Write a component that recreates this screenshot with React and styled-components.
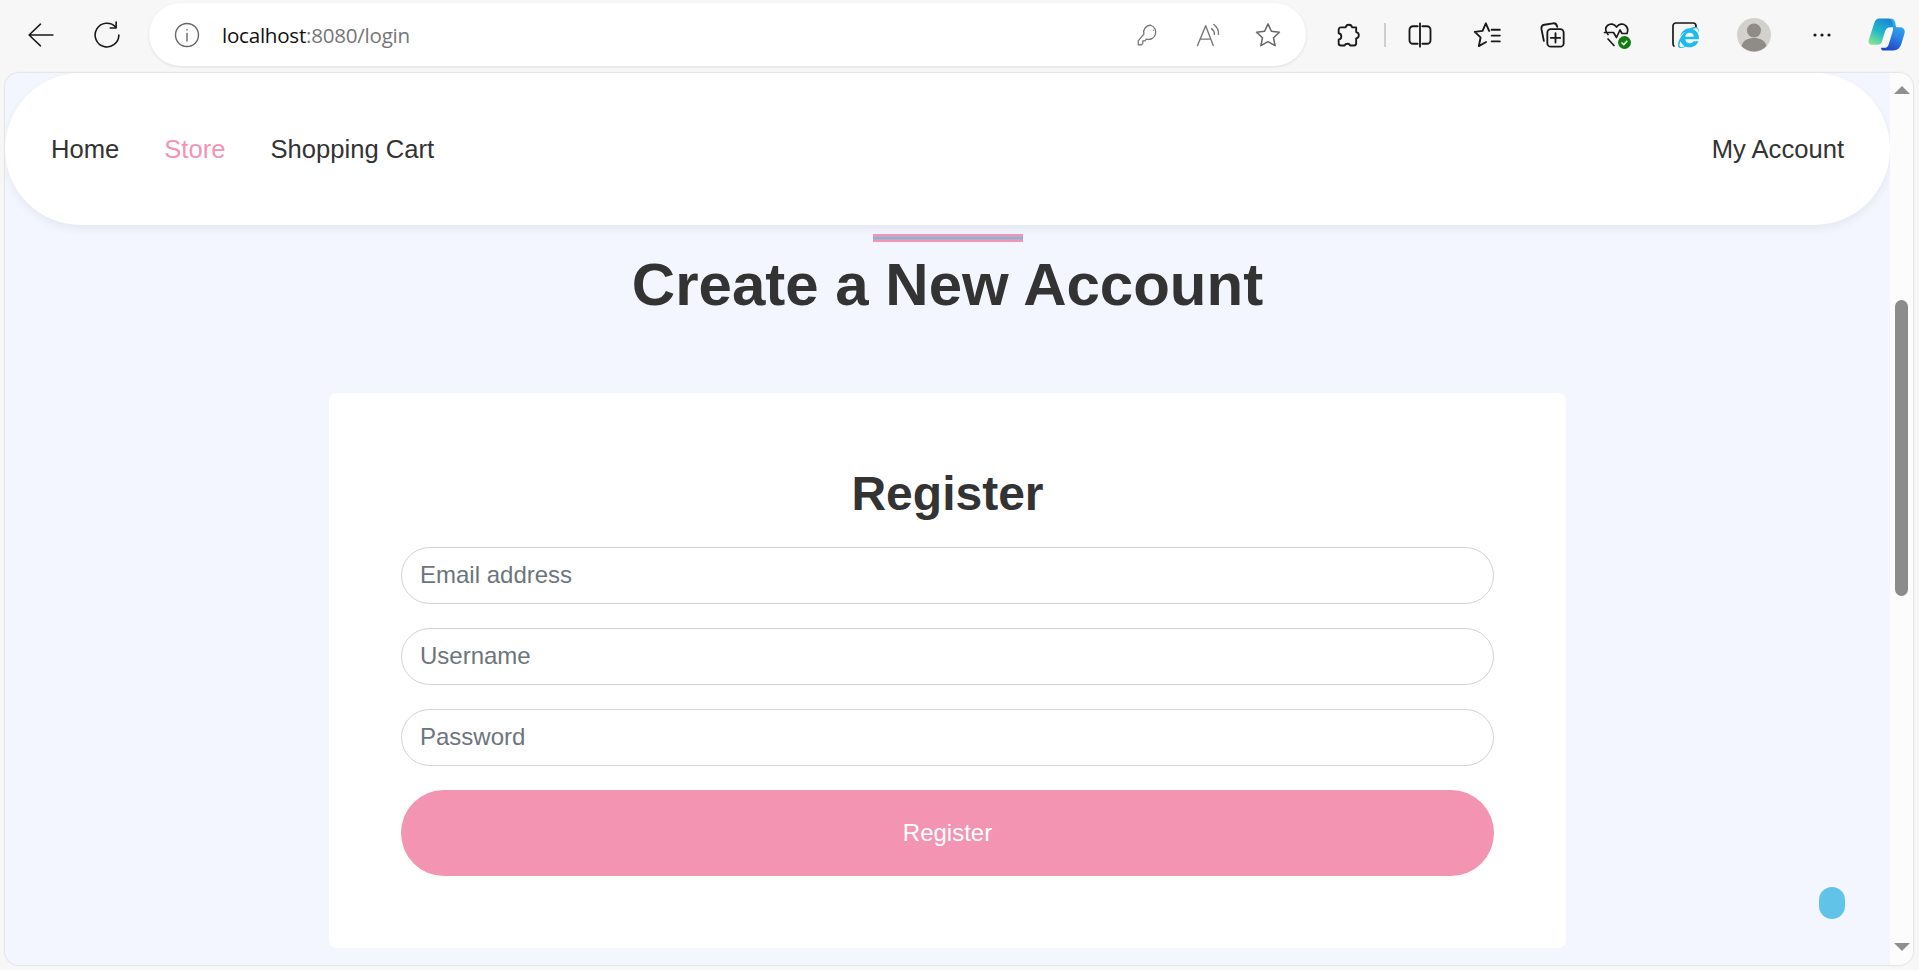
import React from 'react';
import styled, { createGlobalStyle } from 'styled-components';
import { FaInternetExplorer } from 'react-icons/fa';

const GlobalStyle = createGlobalStyle`
  html, body {
    margin: 0;
    height: 100%;
    overflow: hidden;
    background: #f7f7f7;
    font-family: "Liberation Sans", Arial, sans-serif;
  }
  * {
    box-sizing: border-box;
  }
  input::placeholder {
    color: #6c757d;
    opacity: 1;
  }
`;

const Window = styled.div`
  width: 1919px;
  height: 970px;
  display: flex;
  flex-direction: column;
`;

const Toolbar = styled.div`
  height: 73px;
  flex-shrink: 0;
  display: flex;
  align-items: center;
  padding-bottom: 4px;
`;

const ToolSlot = styled.div`
  width: ${(props) => props.$w || 66}px;
  margin-left: ${(props) => props.$ml || 0}px;
  height: 48px;
  display: flex;
  align-items: center;
  justify-content: center;
  flex-shrink: 0;
`;

const AddressBar = styled.div`
  width: 1157px;
  height: 63px;
  margin-left: 9px;
  border-radius: 32px;
  background: #fff;
  box-shadow: 0 1px 3px rgba(0, 0, 0, 0.1);
  display: flex;
  align-items: center;
  padding: 0 8px 0 25px;
  flex-shrink: 0;
`;

const Url = styled.div`
  margin-left: 22px;
  flex: 1;
  font-family: "Open Sans", sans-serif;
  font-size: 20.6px;
  letter-spacing: -0.25px;
  color: #767676;
`;

const UrlHost = styled.span`
  color: #111;
`;

const BarIcon = styled.div`
  width: 60px;
  display: flex;
  justify-content: center;
`;

const Separator = styled.div`
  width: 2px;
  height: 24px;
  background: #cfcfcf;
  margin-left: 3px;
  flex-shrink: 0;
`;

const Viewport = styled.div`
  flex: 1;
  min-height: 0;
  margin: 0 6px 5px 5px;
  display: flex;
  border-radius: 14px;
  overflow: hidden;
  box-shadow: 0 0 2px rgba(0, 0, 0, 0.25);
`;

const Page = styled.main`
  flex: 1;
  position: relative;
  background: #f3f6fe;
  overflow: hidden;
  display: flex;
  flex-direction: column;
  align-items: center;
`;

const ScrollBar = styled.div`
  width: 23px;
  flex-shrink: 0;
  background: #fcfcfc;
  display: flex;
  flex-direction: column;
  align-items: center;
  padding: 13px 0 14px;
`;

const ScrollArrow = styled.div`
  width: 0;
  height: 0;
  border-left: 8px solid transparent;
  border-right: 8px solid transparent;
  border-${(props) => (props.$down ? 'top' : 'bottom')}: 8px solid #8f8f8f;
  margin-top: ${(props) => (props.$down ? 'auto' : '0')};
`;

const ScrollThumb = styled.div`
  width: 13px;
  height: 296px;
  border-radius: 7px;
  background: #8c8c8c;
  margin-top: 206px;
`;

const Nav = styled.nav`
  width: 100%;
  height: 152px;
  flex-shrink: 0;
  background: #fff;
  border-radius: 76px;
  box-shadow: 0 4px 10px rgba(0, 0, 0, 0.06);
  display: flex;
  align-items: center;
  justify-content: space-between;
  padding: 0 46px;
`;

const NavLinks = styled.div`
  display: flex;
  gap: 45px;
`;

const NavLink = styled.a`
  font-size: 25.6px;
  color: ${(props) => (props.$active ? '#f394b2' : '#333')};
  text-decoration: none;
`;

const Underline = styled.div`
  width: 150px;
  height: 8px;
  flex-shrink: 0;
  margin-top: 9px;
  background: #62c3e8;
  border-top: 3px solid #f394b2;
  border-bottom: 3px solid #f394b2;
`;

const Title = styled.h1`
  margin: 7px 0 72px;
  font-size: 60px;
  line-height: 72px;
  font-weight: 700;
  color: #333;
`;

const Card = styled.section`
  width: 1237px;
  height: 555px;
  flex-shrink: 0;
  background: #fff;
  border-radius: 8px;
  padding: 72px 72px 0;
  display: flex;
  flex-direction: column;
`;

const CardTitle = styled.h2`
  margin: 0 0 25px;
  text-align: center;
  font-size: 48px;
  line-height: 57px;
  font-weight: 700;
  color: #333;
`;

const Form = styled.form`
  display: flex;
  flex-direction: column;
  gap: 24px;
`;

const Input = styled.input`
  width: 100%;
  height: 57px;
  border: 1.5px solid #ced4da;
  border-radius: 29px;
  background: #fff;
  padding: 0 18px 2px;
  font-family: inherit;
  font-size: 24px;
  color: #333;
  outline: none;
`;

const Submit = styled.button`
  width: 100%;
  height: 86px;
  border: none;
  border-radius: 43px;
  background: #f394b2;
  color: #fff;
  font-family: inherit;
  font-size: 24px;
`;

const BackToTop = styled.div`
  position: absolute;
  left: 1814px;
  top: 814px;
  width: 26px;
  height: 32px;
  border-radius: 13px;
  background: #62c3e8;
`;

const Glyph = ({ w = 28, h = 28, box = '0 0 24 24', color = '#1a1a1a', sw = 1.5, children }) => (
  <svg
    width={w}
    height={h}
    viewBox={box}
    fill='none'
    stroke={color}
    strokeWidth={sw}
    strokeLinecap='round'
    strokeLinejoin='round'
  >
    {children}
  </svg>
);

const Copilot = () => (
  <svg width='37' height='33' viewBox='0 0 36 32'>
    <defs>
      <linearGradient id='cpA' x1='0.7' y1='0' x2='0.2' y2='1'>
        <stop offset='0' stopColor='#1a86d8' />
        <stop offset='0.5' stopColor='#1fb8c9' />
        <stop offset='1' stopColor='#86e38f' />
      </linearGradient>
      <linearGradient id='cpB' x1='0.7' y1='0' x2='0.4' y2='1'>
        <stop offset='0' stopColor='#35b6ee' />
        <stop offset='0.55' stopColor='#2a83e6' />
        <stop offset='1' stopColor='#2146c9' />
      </linearGradient>
    </defs>
    <path d='M11 .5h9c2.500 0 4 1.500 4.500 4L25 9h-3c-3 0-4.500 1.500-5.500 4l-3 10c-.6 1.800-2 3-4 3H4c-2.500 0-4-2-3.300-4.500L6 5C6.800 2.200 8.800.5 11 .5z' fill='url(#cpA)' />
    <path d='M22 .5c2.500 0 4 1.500 4.500 4l.8 4.500H31c3.500 0 5.500 2.500 4.500 6l-3 10c-1.300 4.200-4 6.500-8 6.500h-9c-2 0-3-1-2.700-2.500H16c2 0 3.500-1 4-3l4-13c.5-1.800 .5-3 .2-5.500C23.800 3 23 1.500 22 .5z' fill='url(#cpB)' />
  </svg>
);

const App = () => {
  return (
    <Window>
      <GlobalStyle />
      <Toolbar>
        <ToolSlot $ml={8}>
          <Glyph box='0 0 24 22' w={26} h={24} sw={1.4}>
            <path d='M1 11h22M11.500 1 1 11l10.500 10' />
          </Glyph>
        </ToolSlot>
        <ToolSlot>
          <Glyph box='0 0 26 26' w={28} h={28} sw={1.5}>
            <path d='M21 5.500A11 11 0 1 0 24 13' />
            <path d='M21.500 1v5.500H16' />
          </Glyph>
        </ToolSlot>
        <AddressBar>
          <Glyph box='0 0 26 26' w={26} h={26} color='#666' sw={1.4}>
            <circle cx='13' cy='13' r='11.500' />
            <path d='M13 11.500V19' />
            <path d='M13 7.500v.5' />
          </Glyph>
          <Url>
            <UrlHost>localhost</UrlHost>:8080/login
          </Url>
          <BarIcon>
            <Glyph w={26} h={26} color='#777' sw={1.2}>
              <path d='M14.500 3a6.500 6.500 0 0 0-6.300 8.200L3 17.500V21h3.200l1-1.500v-2h2l1.300-1.700a6.500 6.500 0 1 0 4-12.800z' />
              <path d='M17 7.500v.1' />
            </Glyph>
          </BarIcon>
          <BarIcon>
            <Glyph color='#777' sw={1.2}>
              <path d='M3 21 10 4l6.500 17M5.500 15.500h8.500' />
              <path d='M15 6.500a6 6 0 0 1 2.500 5M17 3a10 10 0 0 1 4 8.500' />
            </Glyph>
          </BarIcon>
          <BarIcon>
            <Glyph color='#666' sw={1.3}>
              <path d='m12 2.500 2.900 6.300 6.900.8-5.100 4.700 1.400 6.800-6.100-3.400-6.100 3.400 1.400-6.800-5.100-4.700 6.900-.8z' />
            </Glyph>
          </BarIcon>
        </AddressBar>
        <ToolSlot $ml={9}>
          <Glyph sw={1.6}>
            <path d='M10 5.500a2.800 2.800 0 0 1 5.500 0H19v4a2.800 2.800 0 0 1 0 5.500V19a2 2 0 0 1-2 2h-3a2.800 2.800 0 0 0-5 0H6a2 2 0 0 1-2-2v-3a2.800 2.800 0 0 0 0-5.500V7.500a2 2 0 0 1 2-2z' />
          </Glyph>
        </ToolSlot>
        <Separator />
        <ToolSlot $ml={1}>
          <Glyph sw={1.6}>
            <path d='M10 4.500H6a3 3 0 0 0-3 3v9a3 3 0 0 0 3 3h4M14 4.500h4a3 3 0 0 1 3 3v9a3 3 0 0 1-3 3h-4M12 2v20' />
          </Glyph>
        </ToolSlot>
        <ToolSlot $ml={1} $w={65}>
          <Glyph sw={1.6}>
            <path d='M14 8.500h-.2L11 2 8.200 8.500 1.500 9.300l5 4.800L5 21.500l6.200-3.500' />
            <path d='M16 7.500h7M16 12.500h7M16 17.500h7' />
          </Glyph>
        </ToolSlot>
        <ToolSlot $w={65}>
          <Glyph sw={1.6}>
            <path d='M5 17 3 7c-.3-2 .7-3.500 2.500-3.800L13 2c1.800-.3 3 .8 3.500 3' />
            <rect x='8' y='7' width='14' height='15' rx='3' />
            <path d='M15 10.500v8M11 14.500h8' />
          </Glyph>
        </ToolSlot>
        <ToolSlot $ml={1}>
          <svg width='30' height='30' viewBox='0 0 30 30' fill='none'>
            <path
              d='M5 14.500C2 11 2 7.500 4.500 5.500c3-2.500 6.500-1.500 9 1.500 2.500-3 6.500-4 9-1.500 2.500 2.200 2.500 5.500 1.500 8h-5l-2-3.500-3.500 7.500-3-5H1.500M5 19l6 6.500'
              stroke='#1a1a1a'
              strokeWidth='1.700'
              strokeLinejoin='round'
              strokeLinecap='round'
            />
            <circle cx='21.500' cy='22.500' r='6.500' fill='#107c10' />
            <path d='m18.500 22.500 2.200 2.200 3.600-4' stroke='#fff' strokeWidth='1.600' />
          </svg>
        </ToolSlot>
        <ToolSlot $ml={2} $w={65}>
          <svg width='30' height='30' viewBox='0 0 30 30' fill='none'>
            <path
              d='M3 26c-.8-.500-1-1.500-1-2.500V6a3 3 0 0 1 3-3h17a3 3 0 0 1 3 3v1'
              stroke='#1a1a1a'
              strokeWidth='1.700'
              strokeLinecap='round'
            />
            <g transform='translate(7 7)'>
              <FaInternetExplorer size={21} color='#1ebbee' />
            </g>
          </svg>
        </ToolSlot>
        <ToolSlot $ml={2} $w={67}>
          <svg width='34' height='34' viewBox='0 0 34 34'>
            <circle cx='17' cy='17' r='17' fill='#d3d1cd' />
            <circle cx='17' cy='12.500' r='7' fill='#8f8b87' />
            <path d='M4.500 28c1.500-6 7-8 12.500-8s11 2 12.500 8a17 17 0 0 1-25 0z' fill='#8f8b87' />
          </svg>
        </ToolSlot>
        <ToolSlot $w={70}>
          <svg width='20' height='6' viewBox='0 0 20 6'>
            <circle cx='3' cy='3' r='1.600' fill='#1a1a1a' />
            <circle cx='10' cy='3' r='1.600' fill='#1a1a1a' />
            <circle cx='17' cy='3' r='1.600' fill='#1a1a1a' />
          </svg>
        </ToolSlot>
        <ToolSlot $w={58}>
          <Copilot />
        </ToolSlot>
      </Toolbar>
      <Viewport>
        <Page>
          <Nav>
            <NavLinks>
              <NavLink>Home</NavLink>
              <NavLink $active>Store</NavLink>
              <NavLink>Shopping Cart</NavLink>
            </NavLinks>
            <NavLink>My Account</NavLink>
          </Nav>
          <Underline />
          <Title>Create a New Account</Title>
          <Card>
            <CardTitle>Register</CardTitle>
            <Form>
              <Input placeholder='Email address' />
              <Input placeholder='Username' />
              <Input placeholder='Password' />
              <Submit type='button'>Register</Submit>
            </Form>
          </Card>
          <BackToTop />
        </Page>
        <ScrollBar>
          <ScrollArrow />
          <ScrollThumb />
          <ScrollArrow $down />
        </ScrollBar>
      </Viewport>
    </Window>
  );
};

export default App;
